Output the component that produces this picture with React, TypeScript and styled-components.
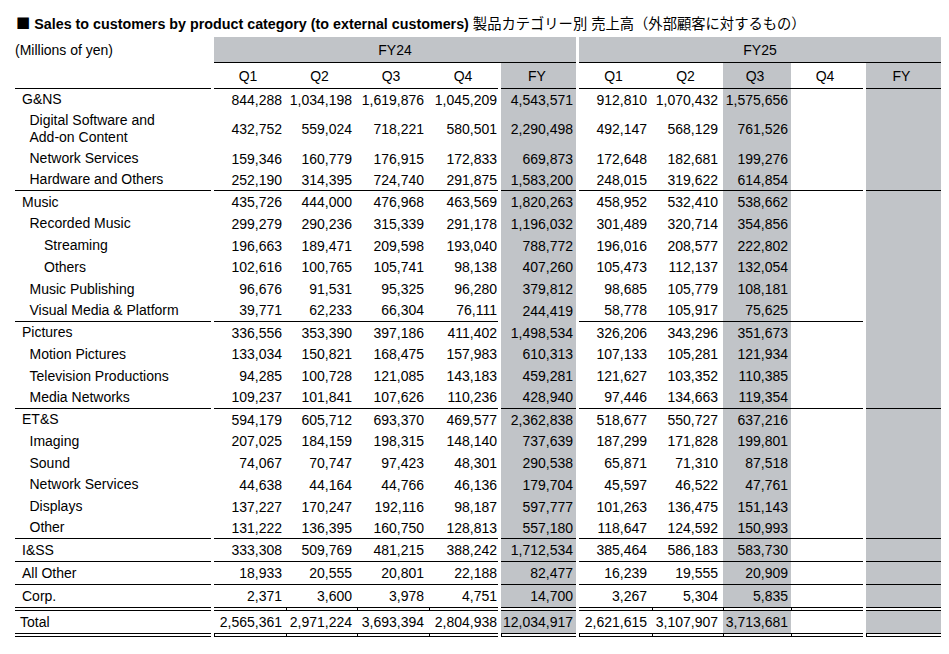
import React from 'react';
import styled, { createGlobalStyle, css } from 'styled-components';

const GREY = '#c1c4c8';
const INK = '#000';

const GlobalStyle = createGlobalStyle`
  html, body { margin: 0; padding: 0; background: #fff; }
  body { font-family: "Liberation Sans", Arial, sans-serif; color: ${INK}; }
`;

const Page = styled.div`
  width: 949px;
  padding-left: 15px;
  box-sizing: border-box;
  font-family: "Liberation Sans", Arial, sans-serif;
  font-size: 14px;
  color: ${INK};
`;

const Title = styled.h1`
  margin: 0;
  height: 37px;
  padding: 15px 0 0 1px;
  box-sizing: border-box;
  font-size: 14.3px;
  line-height: 16px;
  font-weight: 700;
  white-space: nowrap;
`;

const Mark = styled.span`
  font-family: "Noto Sans CJK JP", sans-serif;
  font-weight: 400;
`;

const TitleJa = styled.span`
  font-family: "Liberation Sans", "Noto Sans CJK JP", sans-serif;
  font-weight: 400;
`;

const Sheet = styled.div`
  display: grid;
  grid-template-columns: 196px 3px 72px 71px 72px 69px 3px 75px 3px 73px 71px 68px 72px 3px 75px;
`;

type Rule = 'none' | 'single' | 'total';

interface CellProps {
  $h: number;
  $rule?: Rule;
  $grey?: boolean;
  $tickTop?: boolean;
  $tickBottom?: boolean;
}

const line = (pos: string, size: string) => `linear-gradient(${INK}, ${INK}) ${pos} / ${size} no-repeat`;

const ruleCss = (p: CellProps) => {
  const fill = p.$grey ? GREY : '#fff';
  if (p.$rule === 'total') {
    const layers = [
      line('0 0', '100% 1px'),
      line('0 3px', '100% 1px'),
      line('0 100%', '100% 1px'),
      line('0 calc(100% - 3px)', '100% 1px'),
    ];
    if (p.$tickTop) layers.push(line('0 0', '1px 4px'));
    if (p.$tickBottom) layers.push(line('0 100%', '1px 4px'));
    layers.push(`linear-gradient(${fill}, ${fill}) 0 4px / 100% calc(100% - 8px) no-repeat`);
    return css`
      background: ${layers.join(', ')};
      padding-top: 4px;
      padding-bottom: 4px;
    `;
  }
  return css`
    background: ${fill};
    border-bottom: ${p.$rule === 'single' ? `1px solid ${INK}` : 'none'};
  `;
};

const Cell = styled.div<CellProps>`
  box-sizing: border-box;
  height: ${(p) => p.$h}px;
  display: flex;
  align-items: center;
  line-height: 16px;
  white-space: nowrap;
  ${ruleCss}
`;

const LabelCell = styled(Cell)<{ $indent: number }>`
  padding-left: ${(p) => p.$indent}px;
  line-height: 17px;
`;

const NumCell = styled(Cell)<{ $pr: number }>`
  justify-content: flex-end;
  padding-right: ${(p) => p.$pr}px;
`;

const HeadCell = styled(Cell)<{ $span?: number; $pr?: number }>`
  justify-content: center;
  grid-column: span ${(p) => p.$span ?? 1};
  padding-right: ${(p) => p.$pr ?? 4}px;
`;

const Gap = styled.div`
  background: #fff;
`;

type RowRule = 'none' | 'single' | 'partial' | 'total';

interface Row {
  label: React.ReactNode;
  indent: number;
  fy24: string[];
  fy24Total: string;
  fy25: string[];
  rule: RowRule;
  h: number;
}

const L0 = 7;
const L1 = 14.5;
const L2 = 29;
const N = 21.75;

const rows: Row[] = [
  { label: 'G&NS', indent: L0, fy24: ['844,288', '1,034,198', '1,619,876', '1,045,209'], fy24Total: '4,543,571', fy25: ['912,810', '1,070,432', '1,575,656'], rule: 'none', h: N },
  { label: <>Digital Software and<br />Add-on Content</>, indent: L1, fy24: ['432,752', '559,024', '718,221', '580,501'], fy24Total: '2,290,498', fy25: ['492,147', '568,129', '761,526'], rule: 'none', h: 37 },
  { label: 'Network Services', indent: L1, fy24: ['159,346', '160,779', '176,915', '172,833'], fy24Total: '669,873', fy25: ['172,648', '182,681', '199,276'], rule: 'none', h: N },
  { label: 'Hardware and Others', indent: L1, fy24: ['252,190', '314,395', '724,740', '291,875'], fy24Total: '1,583,200', fy25: ['248,015', '319,622', '614,854'], rule: 'single', h: N },
  { label: 'Music', indent: L0, fy24: ['435,726', '444,000', '476,968', '463,569'], fy24Total: '1,820,263', fy25: ['458,952', '532,410', '538,662'], rule: 'none', h: N },
  { label: 'Recorded Music', indent: L1, fy24: ['299,279', '290,236', '315,339', '291,178'], fy24Total: '1,196,032', fy25: ['301,489', '320,714', '354,856'], rule: 'none', h: N },
  { label: 'Streaming', indent: L2, fy24: ['196,663', '189,471', '209,598', '193,040'], fy24Total: '788,772', fy25: ['196,016', '208,577', '222,802'], rule: 'none', h: N },
  { label: 'Others', indent: L2, fy24: ['102,616', '100,765', '105,741', '98,138'], fy24Total: '407,260', fy25: ['105,473', '112,137', '132,054'], rule: 'none', h: N },
  { label: 'Music Publishing', indent: L1, fy24: ['96,676', '91,531', '95,325', '96,280'], fy24Total: '379,812', fy25: ['98,685', '105,779', '108,181'], rule: 'none', h: N },
  { label: 'Visual Media & Platform', indent: L1, fy24: ['39,771', '62,233', '66,304', '76,111'], fy24Total: '244,419', fy25: ['58,778', '105,917', '75,625'], rule: 'partial', h: N },
  { label: 'Pictures', indent: L0, fy24: ['336,556', '353,390', '397,186', '411,402'], fy24Total: '1,498,534', fy25: ['326,206', '343,296', '351,673'], rule: 'none', h: N },
  { label: 'Motion Pictures', indent: L1, fy24: ['133,034', '150,821', '168,475', '157,983'], fy24Total: '610,313', fy25: ['107,133', '105,281', '121,934'], rule: 'none', h: N },
  { label: 'Television Productions', indent: L1, fy24: ['94,285', '100,728', '121,085', '143,183'], fy24Total: '459,281', fy25: ['121,627', '103,352', '110,385'], rule: 'none', h: N },
  { label: 'Media Networks', indent: L1, fy24: ['109,237', '101,841', '107,626', '110,236'], fy24Total: '428,940', fy25: ['97,446', '134,663', '119,354'], rule: 'single', h: N },
  { label: 'ET&S', indent: L0, fy24: ['594,179', '605,712', '693,370', '469,577'], fy24Total: '2,362,838', fy25: ['518,677', '550,727', '637,216'], rule: 'none', h: N },
  { label: 'Imaging', indent: L1, fy24: ['207,025', '184,159', '198,315', '148,140'], fy24Total: '737,639', fy25: ['187,299', '171,828', '199,801'], rule: 'none', h: N },
  { label: 'Sound', indent: L1, fy24: ['74,067', '70,747', '97,423', '48,301'], fy24Total: '290,538', fy25: ['65,871', '71,310', '87,518'], rule: 'none', h: N },
  { label: 'Network Services', indent: L1, fy24: ['44,638', '44,164', '44,766', '46,136'], fy24Total: '179,704', fy25: ['45,597', '46,522', '47,761'], rule: 'none', h: N },
  { label: 'Displays', indent: L1, fy24: ['137,227', '170,247', '192,116', '98,187'], fy24Total: '597,777', fy25: ['101,263', '136,475', '151,143'], rule: 'none', h: N },
  { label: 'Other', indent: L1, fy24: ['131,222', '136,395', '160,750', '128,813'], fy24Total: '557,180', fy25: ['118,647', '124,592', '150,993'], rule: 'single', h: N },
  { label: 'I&SS', indent: L0, fy24: ['333,308', '509,769', '481,215', '388,242'], fy24Total: '1,712,534', fy25: ['385,464', '586,183', '583,730'], rule: 'single', h: 23 },
  { label: 'All Other', indent: L0, fy24: ['18,933', '20,555', '20,801', '22,188'], fy24Total: '82,477', fy25: ['16,239', '19,555', '20,909'], rule: 'single', h: 23 },
  { label: 'Corp.', indent: L0, fy24: ['2,371', '3,600', '3,978', '4,751'], fy24Total: '14,700', fy25: ['3,267', '5,304', '5,835'], rule: 'none', h: 22 },
  { label: 'Total', indent: 5, fy24: ['2,565,361', '2,971,224', '3,693,394', '2,804,938'], fy24Total: '12,034,917', fy25: ['2,621,615', '3,107,907', '3,713,681'], rule: 'total', h: 30 },
];

const FY24_PAD = [4, 5, 5, 1];
const FY25_PAD = [5, 5, 3, 5];

function DataRow({ row }: { row: Row }) {
  const total = row.rule === 'total';
  const ruleFor = (fyColumn: boolean): Rule => {
    if (row.rule === 'total') return 'total';
    if (row.rule === 'single') return 'single';
    if (row.rule === 'partial') return fyColumn ? 'none' : 'single';
    return 'none';
  };
  return (
    <>
      <LabelCell $h={row.h} $rule={ruleFor(false)} $indent={row.indent}>
        <span>{row.label}</span>
      </LabelCell>
      <Gap />
      {row.fy24.map((v, i) => (
        <NumCell key={`a${i}`} $h={row.h} $rule={ruleFor(false)} $pr={FY24_PAD[i]} $tickTop={total && i > 0} $tickBottom={total}>
          {v}
        </NumCell>
      ))}
      <Gap />
      <NumCell $h={row.h} $rule={ruleFor(true)} $grey $pr={3} $tickBottom={total}>
        {row.fy24Total}
      </NumCell>
      <Gap />
      {[0, 1, 2, 3].map((i) => (
        <NumCell key={`b${i}`} $h={row.h} $rule={ruleFor(false)} $grey={i === 2} $pr={FY25_PAD[i]} $tickTop={total && i > 0} $tickBottom={total}>
          {row.fy25[i] ?? ''}
        </NumCell>
      ))}
      <Gap />
      <NumCell $h={row.h} $rule={ruleFor(true)} $grey $pr={3} $tickBottom={total} />
    </>
  );
}

export default function App() {
  return (
    <Page>
      <GlobalStyle />
      <Title>
        <Mark>■</Mark> Sales to customers by product category (to external customers)
        <TitleJa> 製品カテゴリー別 売上高（外部顧客に対するもの）</TitleJa>
      </Title>
      <Sheet>
        <LabelCell $h={26} $indent={0}>(Millions of yen)</LabelCell>
        <Gap />
        <HeadCell $h={26} $span={6} $pr={0} $grey $rule="single">FY24</HeadCell>
        <Gap />
        <HeadCell $h={26} $span={6} $pr={0} $grey $rule="single">FY25</HeadCell>

        <LabelCell $h={26} $indent={0} $rule="single" />
        <Gap />
        <HeadCell $h={26} $rule="single">Q1</HeadCell>
        <HeadCell $h={26} $rule="single">Q2</HeadCell>
        <HeadCell $h={26} $rule="single">Q3</HeadCell>
        <HeadCell $h={26} $rule="single" $pr={1}>Q4</HeadCell>
        <Gap />
        <HeadCell $h={26} $rule="single" $grey $pr={3}>FY</HeadCell>
        <Gap />
        <HeadCell $h={26} $rule="single">Q1</HeadCell>
        <HeadCell $h={26} $rule="single">Q2</HeadCell>
        <HeadCell $h={26} $rule="single" $grey>Q3</HeadCell>
        <HeadCell $h={26} $rule="single">Q4</HeadCell>
        <Gap />
        <HeadCell $h={26} $rule="single" $grey>FY</HeadCell>

        {rows.map((r, i) => (
          <DataRow key={i} row={r} />
        ))}
      </Sheet>
    </Page>
  );
}
